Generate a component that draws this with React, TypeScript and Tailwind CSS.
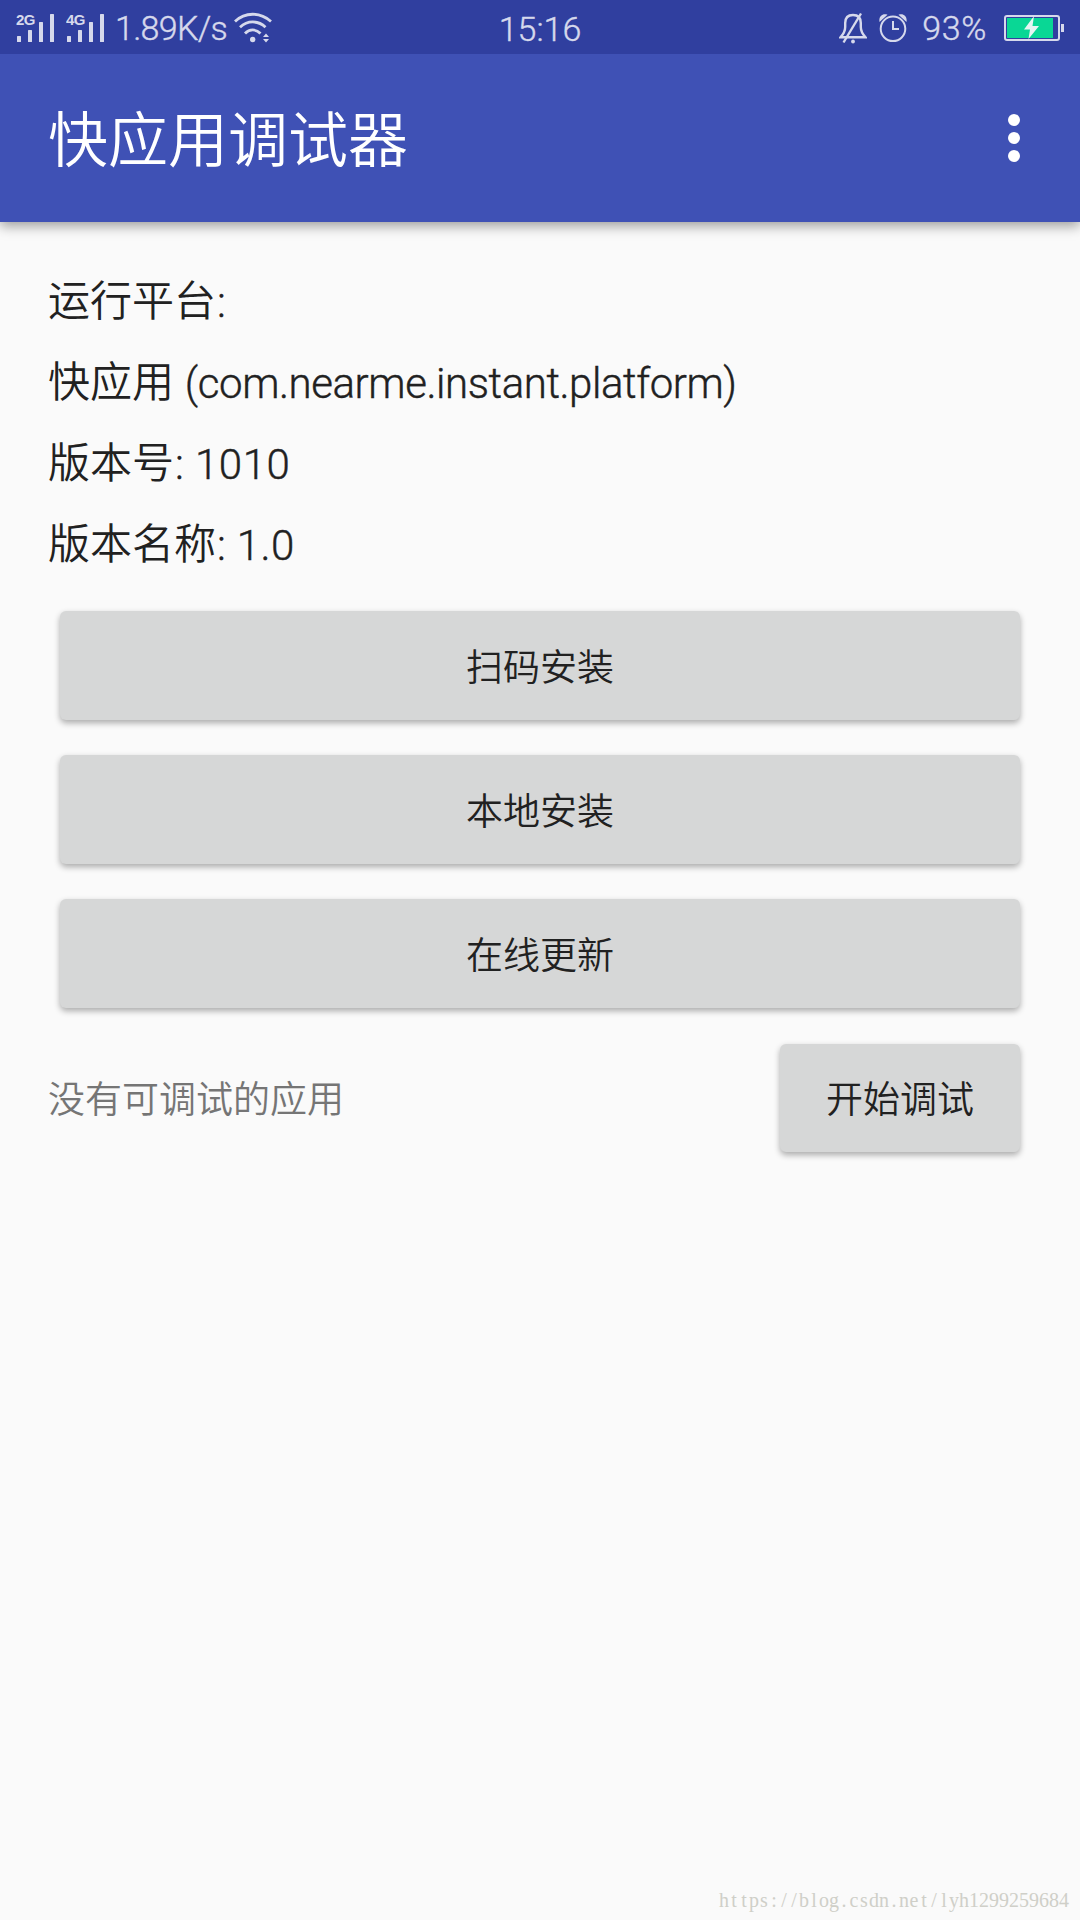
import type { ReactNode } from "react";

const platformInfo: { label: string; value: string; valueClass: string }[] = [
  { label: "运行平台", value: ":", valueClass: "" },
  { label: "快应用", value: " (com.nearme.instant.platform)", valueClass: "tracking-[-0.43px]" },
  { label: "版本号", value: ": 1010", valueClass: "tracking-[0.5px]" },
  { label: "版本名称", value: ": 1.0", valueClass: "tracking-[0.4px]" },
];

const actions = ["扫码安装", "本地安装", "在线更新"];

const WATERMARK = "https://blog.csdn.net/lyh1299259684";

function SignalIcon({ label }: { label: string }) {
  return (
    <svg className="h-[54px] w-[38px]" viewBox="0 0 38 54" fill="currentColor" aria-hidden="true">
      <text x="0" y="24" fontSize="15" fontWeight="700" fontFamily="Liberation Sans, sans-serif" textLength="19.5">
        {label}
      </text>
      <rect x="1" y="35" width="4" height="6" rx="0.5" />
      <rect x="12" y="29" width="4" height="12" rx="0.5" />
      <rect x="23" y="21" width="4" height="20" rx="0.5" />
      <rect x="34" y="13" width="4" height="28" rx="0.5" />
    </svg>
  );
}

function WifiIcon() {
  return (
    <svg className="h-[54px] w-[38px]" viewBox="0 0 38 54" fill="none" stroke="currentColor" strokeWidth="2.8" aria-hidden="true">
      <path d="M1 20.500C11 10.800 26 10.800 37 20.500" />
      <path d="M6 26.200C13.500 19.200 24 19.200 31.500 26.200" />
      <path d="M11 32.500C15.500 27.800 22 27.800 26.500 32.500" />
      <circle cx="18.700" cy="38.500" r="2.700" fill="currentColor" stroke="none" />
      <path d="M29 36l3-3.500 3 3.500zM29 38l3 3.500 3-3.500z" fill="currentColor" stroke="none" />
    </svg>
  );
}

function BellOffIcon() {
  return (
    <svg className="h-[54px] w-[28px]" viewBox="0 0 28 54" fill="none" stroke="currentColor" strokeWidth="2.400" aria-hidden="true">
      <path d="M1.500 36.300C4.500 33 6.200 30 6.200 26V22C6.200 17 9 14 14 14S21.800 17 21.800 22V26C21.800 30 23.500 33 26.500 36.300Z" />
      <path d="M4.500 41.500L22 12.500" />
      <circle cx="14" cy="40.500" r="1.900" fill="currentColor" stroke="none" />
    </svg>
  );
}

function AlarmIcon() {
  return (
    <svg className="h-[54px] w-[28px]" viewBox="0 0 28 54" fill="none" stroke="currentColor" strokeWidth="2" aria-hidden="true">
      <circle cx="14" cy="27.800" r="12.300" />
      <path d="M14 20V28H20" />
      <path d="M0.500 21C-0.500 15.500 3.500 12 8.500 13.800ZM27.500 21C28.500 15.500 24.500 12 19.500 13.800Z" fill="currentColor" stroke="none" />
    </svg>
  );
}

function BatteryIcon() {
  return (
    <svg className="h-[54px] w-[60px]" viewBox="0 0 60 54" aria-hidden="true">
      <rect x="1" y="15" width="54" height="24" rx="2" fill="none" stroke="#d6d9ec" strokeWidth="2" />
      <rect x="57" y="23" width="3" height="8" fill="#d6d9ec" />
      <rect x="3" y="17" width="46" height="20" fill="#09d795" />
      <path d="M30 15L20 28.500H26L24.500 38L35 25H28.500Z" fill="#e6f5f3" />
    </svg>
  );
}

function StatusBar() {
  return (
    <div className="relative z-10 grid h-[54px] grid-cols-3 items-center overflow-hidden bg-[#303f9f] text-[34px] font-light text-[#d6d9ec] [-webkit-text-stroke:0.4px]">
      <div className="flex items-center pl-4">
        <SignalIcon label="2G" />
        <span className="w-3" />
        <SignalIcon label="4G" />
        <span className="ml-[11px] mr-[7px] pt-0.5 tracking-[-0.7px]">1.89K/s</span>
        <WifiIcon />
      </div>
      <span className="pt-1 text-center">15:16</span>
      <div className="flex items-center justify-end pr-4">
        <BellOffIcon />
        <span className="w-3" />
        <AlarmIcon />
        <span className="ml-[15px] mr-[17px] pt-px tracking-[0.6px]">93%</span>
        <BatteryIcon />
      </div>
    </div>
  );
}

function AppBar() {
  return (
    <header className="relative flex h-[168px] items-center justify-between bg-[#3f51b5] pl-12 pr-[60px] text-white shadow-[0_4px_12px_rgba(0,0,0,0.38)]">
      <h1 className="pt-2 text-[60px] leading-none font-[350]">快应用调试器</h1>
      <button className="flex flex-col gap-[6px]" aria-label="更多">
        <span className="size-3 rounded-full bg-white" />
        <span className="size-3 rounded-full bg-white" />
        <span className="size-3 rounded-full bg-white" />
      </button>
    </header>
  );
}

function RaisedButton({ className = "h-[109px]", children }: { className?: string; children: ReactNode }) {
  return (
    <button
      className={`flex items-center justify-center rounded-[6px] bg-[#d6d7d7] pt-[6px] text-[37px] font-[350] text-[#212121] shadow-[0_3px_6px_rgba(0,0,0,0.32)] ${className}`}
    >
      {children}
    </button>
  );
}

export default function App() {
  return (
    <div className="flex h-[1920px] w-[1080px] flex-col overflow-hidden bg-[#fafafa] font-['Roboto','Noto_Sans_CJK_SC',sans-serif]">
      <StatusBar />
      <AppBar />

      <main className="flex flex-1 flex-col px-12 pt-[39px]">
        {platformInfo.map((row) => (
          <p key={row.label} className="flex h-[81px] whitespace-pre text-[42px] leading-[81px] font-[350] text-[#212121]">
            {row.label}
            <span className={`ml-px pt-px font-light [-webkit-text-stroke:0.4px] ${row.valueClass}`}>{row.value}</span>
          </p>
        ))}

        <div className="mt-[26px] flex flex-col gap-[35px] px-3">
          {actions.map((label) => (
            <RaisedButton key={label}>{label}</RaisedButton>
          ))}
        </div>

        <div className="mt-9 flex items-center justify-between pr-3">
          <span className="pt-[6px] text-[37px] font-[350] text-[#757575]">没有可调试的应用</span>
          <RaisedButton className="h-[108px] w-[240px]">开始调试</RaisedButton>
        </div>
      </main>

      <footer className="flex justify-end pr-[11px] pb-1 font-['Liberation_Serif',serif] text-[20px] leading-8 text-[#cfcfc8]">
        {WATERMARK.split("").map((char, i) => (
          <span key={i} className="w-[10px] text-center">
            {char}
          </span>
        ))}
      </footer>
    </div>
  );
}
